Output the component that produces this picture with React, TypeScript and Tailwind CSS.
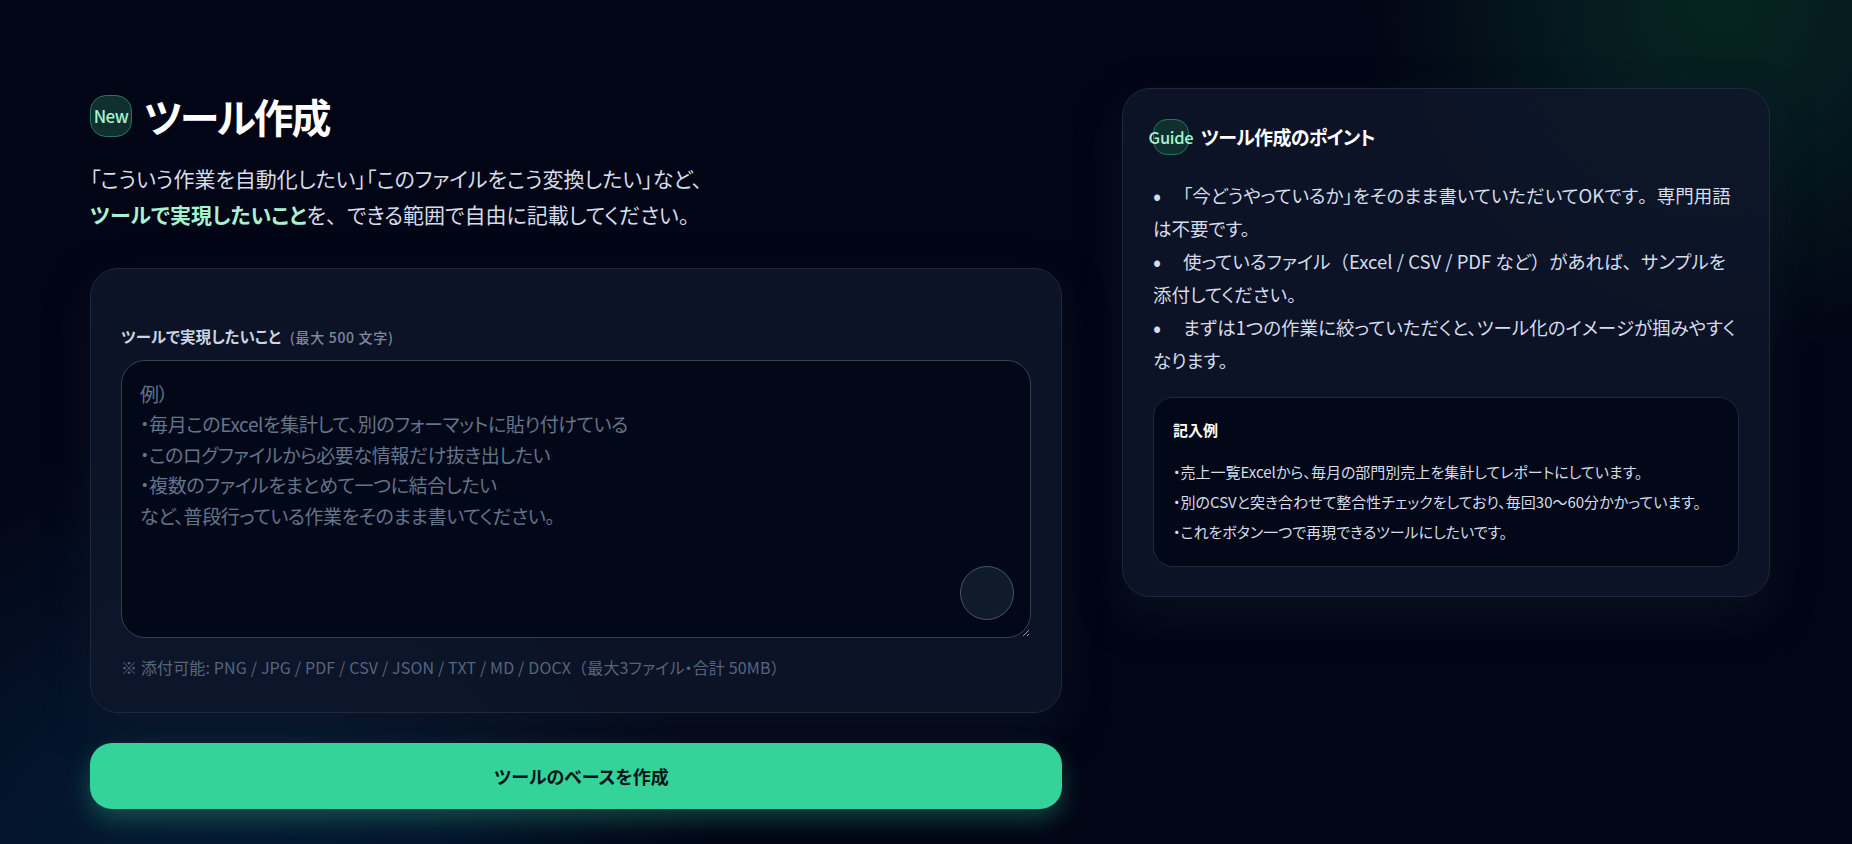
const placeholder = `例）
・毎月このExcelを集計して、別のフォーマットに貼り付けている
・このログファイルから必要な情報だけ抜き出したい
・複数のファイルをまとめて一つに結合したい
など、普段行っている作業をそのまま書いてください。`;

// full-width punctuation, the rest of the page uses proportional kana
const fw = "[font-feature-settings:normal]";

function Badge({ label, className }: { label: string; className: string }) {
  return (
    <span
      className={`flex shrink-0 items-center justify-center border border-[#1f7a5c] bg-[#10302f] font-medium text-[#a7f3d0] ${className}`}
    >
      {label}
    </span>
  );
}

function Tip({ children }: { children: React.ReactNode }) {
  return (
    <p>
      <span className="inline-block w-[30px] text-[24px] leading-[0] align-[-2px]">•</span>
      {children}
    </p>
  );
}

export default function App() {
  return (
    <div className="h-[844px] overflow-hidden bg-[radial-gradient(circle_at_93%_0%,#062321_0px,#051c1f_130px,transparent_360px),radial-gradient(circle_at_12%_110%,#051b35_0px,#04152c_230px,transparent_500px),linear-gradient(#020515,#020515)] font-['Noto_Sans_CJK_JP','Noto_Sans',sans-serif] [font-feature-settings:'palt']">
      <div className="flex gap-[60px] pl-[90px] pr-[82px] pt-[88px]">
        {/* Left column */}
        <main className="w-[972px] shrink-0">
          <div className="flex h-[60px] items-center gap-[12px] pb-[4px]">
            <Badge label="New" className="h-[42px] w-[42px] rounded-[16px] text-[17px] tracking-[-0.5px]" />
            <h1 className="text-[40px] leading-[60px] font-bold text-white tracking-[-2.2px]">ツール作成</h1>
          </div>
          <p className="mt-[12px] text-[21px] leading-[36px] text-[#d5dcea]">
            「こういう作業を自動化したい」「このファイルをこう変換したい」など、
            <br />
            <span className="font-bold text-[#a7f3d0]">ツールで実現したいこと</span>
            を<span className={fw}>、</span>できる範囲で自由に記載してください。
          </p>

          <section className="mt-[36px] h-[445px] rounded-[28px] border border-[#1e293b] bg-[#0f172a]/80 px-[30px] pt-[55px] shadow-[0_18px_40px_rgba(15,23,42,0.6)]">
            <label className="block text-[15.5px] leading-[24px] font-bold text-[#cbd5e1]">
              ツールで実現したいこと
              <span className="ml-[9px] text-[14px] font-medium text-[#7c8aa0] tracking-[0.7px]">(最大 500 文字)</span>
            </label>
            <div className="relative mt-[11px]">
              <textarea
                placeholder={placeholder}
                className="block h-[278px] w-full resize-y rounded-[24px] border border-[#334155] bg-[#030819] px-[18px] py-[18px] text-[19px] leading-[30.4px] tracking-[-0.4px] outline-none placeholder:text-[#64748b]"
              />
              <span className="absolute right-[17px] bottom-[18px] h-[54px] w-[54px] rounded-full border border-[#475569] bg-[#0f1a2a]" />
            </div>
            <p className="mt-[17px] text-[16px] leading-[24px] text-[#56657d] tracking-[0.15px]">
              ※ 添付可能: PNG / JPG / PDF / CSV / JSON / TXT / MD / DOCX
              <span className={fw}>（</span>最大3ファイル・合計 50MB<span className={fw}>）</span>
            </p>
          </section>

          <button className="mt-[30px] block h-[66px] w-full rounded-[22px] bg-[#34d399] pl-[11px] text-[18px] font-bold text-[#03131a] shadow-[0_10px_24px_rgba(52,211,153,0.3)]">
            ツールのベースを作成
          </button>
        </main>

        {/* Right column */}
        <aside className="h-[509px] w-[648px] shrink-0 rounded-[28px] border border-[#1e293b] bg-[#0f172a]/80 px-[30px] pt-[30px] shadow-[0_18px_40px_rgba(15,23,42,0.6)]">
          <div className="flex h-[36px] items-center gap-[12px]">
            <Badge label="Guide" className="h-[36px] w-[36px] rounded-[14px] whitespace-nowrap text-[16.5px] tracking-[-0.3px]" />
            <h2 className="text-[19px] font-bold text-white tracking-[-0.7px]">ツール作成のポイント</h2>
          </div>
          <div className="mt-[24px] text-[18.5px] leading-[33px] text-[#d5dcea]">
            <Tip>
              「今どうやっているか」をそのまま書いていただいてOKです<span className={fw}>。</span>専門用語は不要です。
            </Tip>
            <Tip>
              使っているファイル<span className={fw}>（</span>Excel / CSV / PDF など<span className={fw}>）</span>
              があれば<span className={fw}>、</span>サンプルを添付してください。
            </Tip>
            <Tip>まずは1つの作業に絞っていただくと、ツール化のイメージが掴みやすくなります。</Tip>
          </div>
          <div className="mt-[20px] h-[170px] rounded-[20px] border border-[#1e293b] bg-[#030819] px-[19px] pt-[20px]">
            <h3 className="text-[15px] leading-[24px] font-bold text-white">記入例</h3>
            <ul className="mt-[15px] text-[15px] leading-[30px] text-[#d5dcea]">
              <li>・売上一覧Excelから、毎月の部門別売上を集計してレポートにしています。</li>
              <li>・別のCSVと突き合わせて整合性チェックをしており、毎回30〜60分かかっています。</li>
              <li>・これをボタン一つで再現できるツールにしたいです。</li>
            </ul>
          </div>
        </aside>
      </div>
    </div>
  );
}
